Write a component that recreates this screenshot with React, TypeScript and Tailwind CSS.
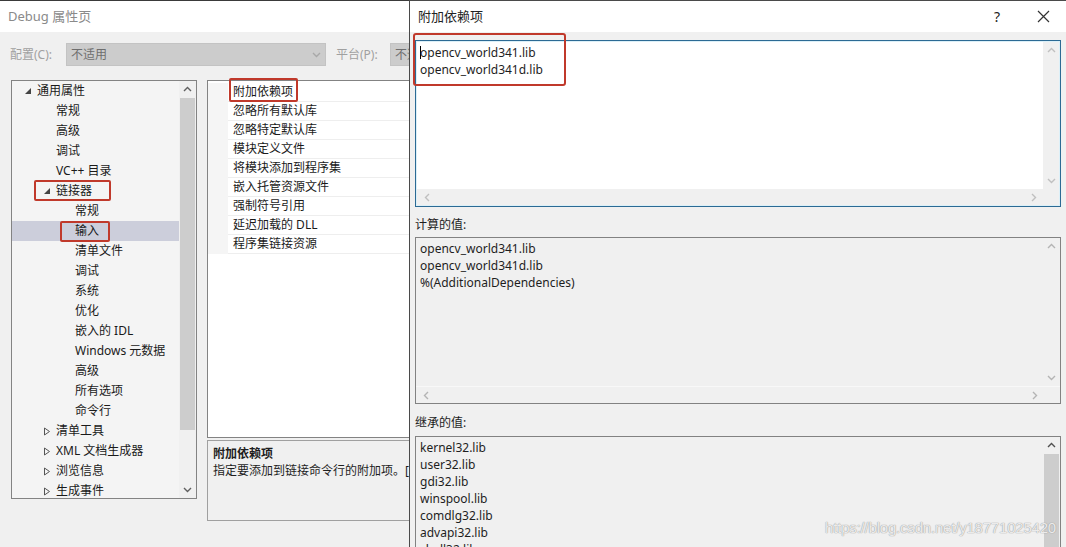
import React from "react";

const font = { fontFamily: '"Noto Sans", "Noto Sans CJK SC", sans-serif' };

type TreeItem = { label: string; level: number; arrow?: "open" | "closed"; selected?: boolean };

const treeItems: TreeItem[] = [
  { label: "通用属性", level: 0, arrow: "open" },
  { label: "常规", level: 1 },
  { label: "高级", level: 1 },
  { label: "调试", level: 1 },
  { label: "VC++ 目录", level: 1 },
  { label: "链接器", level: 1, arrow: "open" },
  { label: "常规", level: 2 },
  { label: "输入", level: 2, selected: true },
  { label: "清单文件", level: 2 },
  { label: "调试", level: 2 },
  { label: "系统", level: 2 },
  { label: "优化", level: 2 },
  { label: "嵌入的 IDL", level: 2 },
  { label: "Windows 元数据", level: 2 },
  { label: "高级", level: 2 },
  { label: "所有选项", level: 2 },
  { label: "命令行", level: 2 },
  { label: "清单工具", level: 1, arrow: "closed" },
  { label: "XML 文档生成器", level: 1, arrow: "closed" },
  { label: "浏览信息", level: 1, arrow: "closed" },
  { label: "生成事件", level: 1, arrow: "closed" },
];

const props = [
  "附加依赖项",
  "忽略所有默认库",
  "忽略特定默认库",
  "模块定义文件",
  "将模块添加到程序集",
  "嵌入托管资源文件",
  "强制符号引用",
  "延迟加载的 DLL",
  "程序集链接资源",
];

function Chevron({ dir, color = "#a6a6a6" }: { dir: "up" | "down" | "left" | "right"; color?: string }) {
  const pts = {
    up: "1,6 4.5,2.5 8,6",
    down: "1,3 4.5,6.5 8,3",
    left: "6,1 2.5,4.5 6,8",
    right: "3,1 6.5,4.5 3,8",
  }[dir];
  return (
    <svg width="9" height="9" viewBox="0 0 9 9">
      <polyline points={pts} fill="none" stroke={color} strokeWidth="1.4" />
    </svg>
  );
}

function Arrow({ kind }: { kind: "open" | "closed" }) {
  if (kind === "open") {
    return (
      <svg width="8" height="8" viewBox="0 0 8 8">
        <polygon points="7,1 7,7 1,7" fill="#444" />
      </svg>
    );
  }
  return (
    <svg width="8" height="9" viewBox="0 0 8 9">
      <polygon points="1.5,1 6.5,4.5 1.5,8" fill="none" stroke="#555" strokeWidth="1" />
    </svg>
  );
}

function TextBox({
  lines,
  height,
  thumb,
  hbar = true,
}: {
  lines: string[];
  height: string;
  thumb?: boolean;
  hbar?: boolean;
}) {
  return (
    <div className={`mx-[5px] flex shrink-0 flex-col border border-[#828282] bg-[#f0f0f0] ${height}`}>
      <div className="flex min-h-0 flex-1">
        <div className="flex-1 pl-[4px] pt-[2px] text-[12px] leading-[17px] text-[#1e1e1e]">
          {lines.map((l, i) => (
            <div key={i}>{l}</div>
          ))}
        </div>
        <div className="flex w-[17px] flex-col items-center bg-[#f0f0f0]">
          <div className="flex h-[17px] shrink-0 items-center justify-center">
            <Chevron dir="up" color={thumb ? "#505050" : "#b4b4b4"} />
          </div>
          {thumb ? (
            <div className="w-[15px] flex-1 bg-[#cdcdcd]" />
          ) : (
            <>
              <div className="flex-1" />
              <div className="flex h-[17px] shrink-0 items-center justify-center">
                <Chevron dir="down" color="#b4b4b4" />
              </div>
            </>
          )}
        </div>
      </div>
      {hbar && (
        <div className="flex h-[17px] shrink-0 items-center justify-between border-t border-[#f8f8f8] bg-[#f0f0f0] pl-[6px] pr-[21px]">
          <Chevron dir="left" color="#b4b4b4" />
          <Chevron dir="right" color="#b4b4b4" />
        </div>
      )}
    </div>
  );
}

export default function App() {
  return (
    <div className="relative h-[547px] w-[1066px] overflow-hidden bg-[#f0f0f0]" style={font}>
      {/* main property page */}
      <div className="flex h-[32px] items-center border-t border-[#3a3a3a] bg-white pl-[8px] text-[13px] text-[#8a8a8a]">
        Debug 属性页
      </div>
      <div className="mt-[11px] flex h-[23px] items-center text-[12px] text-[#a0a0a0]">
        <span className="w-[66px] pl-[10px]">配置(C):</span>
        <div className="flex h-[23px] w-[260px] items-center justify-between border border-[#c3c3c3] bg-[#cccccc] pl-[4px] pr-[4px] text-[#6e6e6e]">
          <span>不适用</span>
          <Chevron dir="down" color="#a8a8a8" />
        </div>
        <span className="ml-[10px] w-[54px]">平台(P):</span>
        <div className="flex h-[23px] w-[200px] items-center border border-[#c3c3c3] bg-[#cccccc] pl-[4px] text-[#6e6e6e]">
          不适用
        </div>
      </div>

      <div className="mt-[14px] flex items-start">
        {/* tree */}
        <div className="relative ml-[11px] flex h-[419px] w-[186px] overflow-hidden border border-[#838383] bg-[#f4f4f4]">
          <div className="flex-1 text-[12px] text-[#1a1a1a]">
            {treeItems.map((t, i) => (
              <div
                key={i}
                className={`flex h-[20px] items-center ${t.selected ? "bg-[#cccedb]" : ""}`}
                style={{ paddingLeft: 12 + t.level * 19 }}
              >
                <span className="flex w-[13px] items-center">{t.arrow && <Arrow kind={t.arrow} />}</span>
                <span>{t.label}</span>
              </div>
            ))}
          </div>
          <div className="flex w-[17px] flex-col items-center bg-[#f0f0f0]">
            <div className="flex h-[17px] items-center justify-center">
              <Chevron dir="up" color="#606060" />
            </div>
            <div className="h-[332px] w-[15px] bg-[#cdcdcd]" />
            <div className="flex-1" />
            <div className="flex h-[17px] items-center justify-center">
              <Chevron dir="down" color="#606060" />
            </div>
          </div>
          <div className="absolute left-[22px] top-[99px] h-[21px] w-[77px] rounded-[2px] border-2 border-[#c0392b]" />
          <div className="absolute left-[48px] top-[140px] h-[21px] w-[50px] rounded-[2px] border-2 border-[#c0392b]" />
        </div>

        {/* property grid + description */}
        <div className="ml-[10px] flex flex-1 flex-col">
          <div className="relative h-[358px] border border-[#838383] bg-white">
            <div className="mt-[2px] text-[12px] text-[#1a1a1a]">
              {props.map((p, i) => (
                <div key={i} className="flex h-[19px]">
                  <div className="w-[20px] bg-[#f5f5f5]" />
                  <div className="flex flex-1 items-center border-b border-[#eeeeee] pl-[5px]">{p}</div>
                </div>
              ))}
            </div>
            <div className="absolute left-[21px] top-[-3px] h-[24px] w-[69px] rounded-[2px] border-2 border-[#c0392b]" />
          </div>
          <div className="mt-[2px] h-[81px] border border-[#a0a0a0] bg-[#f0f0f0] pl-[5px] pt-[4px] text-[12px] leading-[17px] text-[#1e1e1e]">
            <div className="font-bold">附加依赖项</div>
            <div>指定要添加到链接命令行的附加项。[</div>
          </div>
        </div>
      </div>

      {/* dialog */}
      <div className="absolute left-[409px] top-0 flex h-[547px] w-[657px] flex-col overflow-hidden border-l border-t border-[#4a4a4a] bg-[#f0f0f0]">
        <div className="flex h-[31px] shrink-0 items-center justify-between bg-white pl-[8px] text-[13px] text-[#222]">
          <span>附加依赖项</span>
          <div className="flex items-center">
            <span className="w-[46px] text-center text-[14px]">?</span>
            <svg width="46" height="14" viewBox="0 0 46 14">
              <path d="M18 1 L29 12 M29 1 L18 12" stroke="#333" strokeWidth="1.2" />
            </svg>
          </div>
        </div>

        <div className="relative mt-[8px] shrink-0">
          <div className="mx-[5px] border border-[#2c6a94] p-[1px] shadow-[inset_0_0_0_1px_#dcf0f8]">
            <div className="flex h-[163px] flex-col bg-white">
              <div className="flex min-h-0 flex-1">
                <div className="flex-1 pl-[3px] pt-[2px] text-[12px] leading-[17px] text-[#1e1e1e]">
                  <div className="flex items-center">
                    <span className="mr-[-1px] h-[13px] w-[1px] shrink-0 bg-black" />
                    <span>opencv_world341.lib</span>
                  </div>
                  <div>opencv_world341d.lib</div>
                </div>
                <div className="flex w-[16px] flex-col items-center bg-[#f0f0f0]">
                  <div className="flex h-[17px] items-center justify-center">
                    <Chevron dir="up" color="#c0c0c0" />
                  </div>
                  <div className="flex-1" />
                  <div className="flex h-[17px] items-center justify-center">
                    <Chevron dir="down" color="#c0c0c0" />
                  </div>
                </div>
              </div>
              <div className="flex h-[16px] shrink-0 items-center justify-between bg-[#f0f0f0] pl-[6px] pr-[21px]">
                <Chevron dir="left" color="#c0c0c0" />
                <Chevron dir="right" color="#c0c0c0" />
              </div>
            </div>
          </div>
          <div className="absolute left-[3px] top-[-7px] h-[53px] w-[153px] rounded-[3px] border-2 border-[#c0392b]" />
        </div>

        <div className="mt-[9px] h-[17px] shrink-0 pl-[5px] text-[12px] leading-[17px] text-[#1e1e1e]">计算的值:</div>
        <div className="mt-[4px] shrink-0">
          <TextBox
            lines={["opencv_world341.lib", "opencv_world341d.lib", "%(AdditionalDependencies)"]}
            height="h-[167px]"
          />
        </div>

        <div className="mt-[10px] h-[17px] shrink-0 pl-[5px] text-[12px] leading-[17px] text-[#1e1e1e]">继承的值:</div>
        <div className="mt-[5px] shrink-0">
          <TextBox
            lines={["kernel32.lib", "user32.lib", "gdi32.lib", "winspool.lib", "comdlg32.lib", "advapi32.lib", "shell32.lib"]}
            height="h-[130px]"
            thumb
            hbar={false}
          />
        </div>
      </div>

      <div
        className="absolute right-[10px] top-[517px] text-[15px] tracking-[-0.2px] text-white/80"
        style={{ fontFamily: '"Liberation Sans", sans-serif', textShadow: "0 0 1px #9a9a9a, 0 0 1px #9a9a9a" }}
      >
        https://blog.csdn.net/y18771025420
      </div>
    </div>
  );
}
